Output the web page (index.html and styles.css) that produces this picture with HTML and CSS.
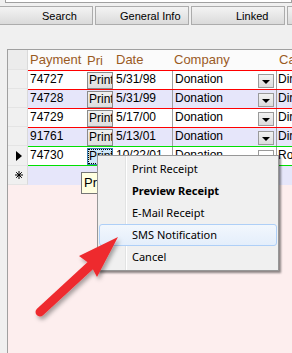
FILE: index.html
```html
<!DOCTYPE html>
<html lang="en">
<head>
    <meta charset="UTF-8">
    <title>Payments</title>
    <link rel="stylesheet" href="styles.css">
</head>
<body>
    <div class="topbox"></div>

    <div class="tabs">
        <div class="tab tab-search">Search</div>
        <div class="tab tab-general">General Info</div>
        <div class="tab tab-linked">Linked</div>
        <div class="tab"></div>
    </div>

    <div class="grid">
        <div class="row head">
            <div class="sel"></div>
            <div class="cells">
                <div class="c pay">Payment</div>
                <div class="c pri">Pri</div>
                <div class="c date">Date</div>
                <div class="c comp-h">Company</div>
                <div class="c ca">Category</div>
            </div>
        </div>

        <div class="row">
            <div class="sel"></div>
            <div class="cells">
                <div class="c pay">74727</div>
                <div class="c pri"><span class="pbtn">Print</span></div>
                <div class="c date">5/31/98</div>
                <div class="c comp"><span>Donation</span><span class="dd"><i></i></span></div>
                <div class="c ca">Direct</div>
            </div>
        </div>
        <div class="row alt">
            <div class="sel"></div>
            <div class="cells">
                <div class="c pay">74728</div>
                <div class="c pri"><span class="pbtn">Print</span></div>
                <div class="c date">5/31/99</div>
                <div class="c comp"><span>Donation</span><span class="dd"><i></i></span></div>
                <div class="c ca">Direct</div>
            </div>
        </div>
        <div class="row">
            <div class="sel"></div>
            <div class="cells">
                <div class="c pay">74729</div>
                <div class="c pri"><span class="pbtn">Print</span></div>
                <div class="c date">5/17/00</div>
                <div class="c comp"><span>Donation</span><span class="dd"><i></i></span></div>
                <div class="c ca">Direct</div>
            </div>
        </div>
        <div class="row alt">
            <div class="sel"></div>
            <div class="cells">
                <div class="c pay">91761</div>
                <div class="c pri"><span class="pbtn">Print</span></div>
                <div class="c date">5/13/01</div>
                <div class="c comp"><span>Donation</span><span class="dd"><i></i></span></div>
                <div class="c ca">Direct</div>
            </div>
        </div>
        <div class="row current">
            <div class="sel">
                <svg width="6" height="10" viewBox="0 0 6 10"><polygon points="0,0 6,5 0,10" fill="#000"/></svg>
            </div>
            <div class="cells">
                <div class="c pay">74730</div>
                <div class="c pri"><span class="pbtn focus">Print</span></div>
                <div class="c date">10/22/01</div>
                <div class="c comp"><span>Donation</span><span class="dd"></span></div>
                <div class="c ca">Royalty</div>
            </div>
        </div>
        <div class="row alt newrow">
            <div class="sel">
                <svg width="8" height="8" viewBox="0 0 8 8" stroke="#000" stroke-width="1">
                    <line x1="4" y1="0" x2="4" y2="8"/>
                    <line x1="0" y1="4" x2="8" y2="4"/>
                    <line x1="1.2" y1="1.2" x2="6.8" y2="6.8"/>
                    <line x1="6.8" y1="1.2" x2="1.2" y2="6.8"/>
                </svg>
            </div>
            <div class="cells"></div>
        </div>
    </div>

    <div class="tooltip">Print</div>

    <div class="menu">
        <div class="item">Print Receipt</div>
        <div class="item bold">Preview Receipt</div>
        <div class="item">E-Mail Receipt</div>
        <div class="item hover">SMS Notification</div>
        <div class="item">Cancel</div>
    </div>

    <svg class="arrow" width="292" height="353" viewBox="0 0 292 353">
        <defs>
            <filter id="shadow" x="-30%" y="-30%" width="160%" height="160%">
                <feDropShadow dx="2" dy="3" stdDeviation="2" flood-color="#000" flood-opacity="0.35"/>
            </filter>
        </defs>
        <g filter="url(#shadow)" fill="#ee2b2f">
            <line x1="40" y1="312" x2="91" y2="265" stroke="#ee2b2f" stroke-width="9" stroke-linecap="round"/>
            <polygon points="118,237 79,256 90,264 97,277"/>
        </g>
    </svg>
</body>
</html>
```

FILE: styles.css
```css
body {
    margin: 0;
    width: 292px;
    height: 353px;
    overflow: hidden;
    position: relative;
    background: #f0f0f0;
    font-family: "Liberation Sans", Arial, sans-serif;
}
.topbox {
    margin-left: 5px;
    height: 2px;
    background: #fff;
    border: 1px solid #a0a0a0;
    border-top: none;
}
.tabs {
    display: flex;
    gap: 2px;
    margin: 3px 0 0 -1px;
    height: 19px;
}
.tab {
    flex: 0 0 94px;
    box-sizing: border-box;
    height: 19px;
    border: 1px solid #acacac;
    background: linear-gradient(#f3f3f3, #e6e6e6 55%, #dadada);
    font-size: 11px;
    line-height: 18px;
    color: #000;
    white-space: nowrap;
}
.tab-search { padding-left: 42px; }
.tab-general { padding-left: 24px; }
.tab-linked { padding-left: 44px; }

.grid {
    margin: 24px 0 0 7px;
    height: 304px;
    border-top: 1px solid #a0a0a0;
    border-left: 1px solid #a0a0a0;
    background: #fdeeee;
}
.row {
    display: flex;
    height: 19px;
    font-size: 12px;
    line-height: 17px;
}
.sel {
    flex: 0 0 20px;
    box-sizing: border-box;
    background: #f0f0f0;
    border-right: 1px solid #dadada;
    border-bottom: 1px solid #e4e4e4;
    display: flex;
    align-items: center;
    padding-left: 8px;
}
.cells {
    flex: 1;
    display: flex;
    box-sizing: border-box;
    border-top: 1px solid #ff0000;
    background: #fff;
    white-space: nowrap;
    overflow: hidden;
}
.alt .cells { background: #e6e6fa; }
.c {
    box-sizing: border-box;
    padding-left: 2px;
    overflow: hidden;
}
.pay { flex: 0 0 58px; }
.pri { flex: 0 0 28px; padding: 1px 0 0 1px; }
.date { flex: 0 0 58px; }
.comp, .comp-h { flex: 0 0 105px; }
.comp {
    display: flex;
    justify-content: space-between;
    border-left: 1px solid #a0a0a0;
    border-right: 1px solid #a0a0a0;
    padding-left: 2px;
}
.ca { flex: 1; padding-left: 1px; }

.head { height: 20px; font-size: 13px; line-height: 20px; }
.head .sel { background: #ececec; }
.head .cells { border-top: none; background: #fbfbfb; color: #9a5a1f; }
.head .comp-h { padding-left: 2px; }
.head .ca { padding-left: 2px; }

.pbtn {
    display: block;
    box-sizing: border-box;
    width: 26px;
    height: 17px;
    padding-left: 1px;
    border: 1px solid #8a8a8a;
    background: linear-gradient(#f0f0f0, #dedede);
    overflow: hidden;
    line-height: 15px;
}
.pbtn.focus {
    background: #cfe6f8;
    outline: 1px dotted #000;
    outline-offset: -2px;
    border-color: #3c7fb1;
}
.dd {
    box-sizing: border-box;
    width: 16px;
    height: 14px;
    margin: 3px 2px 0 0;
    border: 1px solid #9a9a9a;
    background: linear-gradient(#f2f2f2, #dcdcdc);
    display: flex;
    align-items: center;
    justify-content: center;
}
.dd i {
    width: 0;
    height: 0;
    border-left: 4px solid transparent;
    border-right: 4px solid transparent;
    border-top: 4px solid #000;
    margin-top: 1px;
}
.current { height: 20px; }
.current .cells { border-top-color: #00e000; border-bottom: 1px solid #00e000; }
.current .dd { background: #fff; }
.newrow .cells { border-top: none; }
.newrow .sel { padding-left: 7px; }

.tooltip {
    position: absolute;
    left: 81px;
    top: 172px;
    width: 40px;
    height: 20px;
    border: 1px solid #767676;
    background: #ffffe1;
    font-size: 13px;
    line-height: 20px;
    padding-left: 2px;
}
.menu {
    position: absolute;
    left: 97px;
    top: 155px;
    width: 178px;
    padding: 2px 1px;
    border: 1px solid #979797;
    background: #f0f0f0 linear-gradient(to right, transparent 27px, #e2e3e3 27px, #e2e3e3 28px, #fff 28px, #fff 29px, transparent 29px);
    box-shadow: 2px 2px 2px rgba(0, 0, 0, 0.45);
    font-family: "Noto Sans", sans-serif;
    font-size: 11px;
}
.item {
    height: 22px;
    line-height: 22px;
    padding-left: 33px;
    box-sizing: border-box;
    color: #000;
}
.bold { font-weight: bold; }
.hover {
    border: 1px solid #aecff7;
    border-radius: 3px;
    background: linear-gradient(#f2f7fd, #e4eefb);
    line-height: 20px;
    padding-left: 32px;
}
.arrow {
    position: absolute;
    left: 0;
    top: 0;
}
```
